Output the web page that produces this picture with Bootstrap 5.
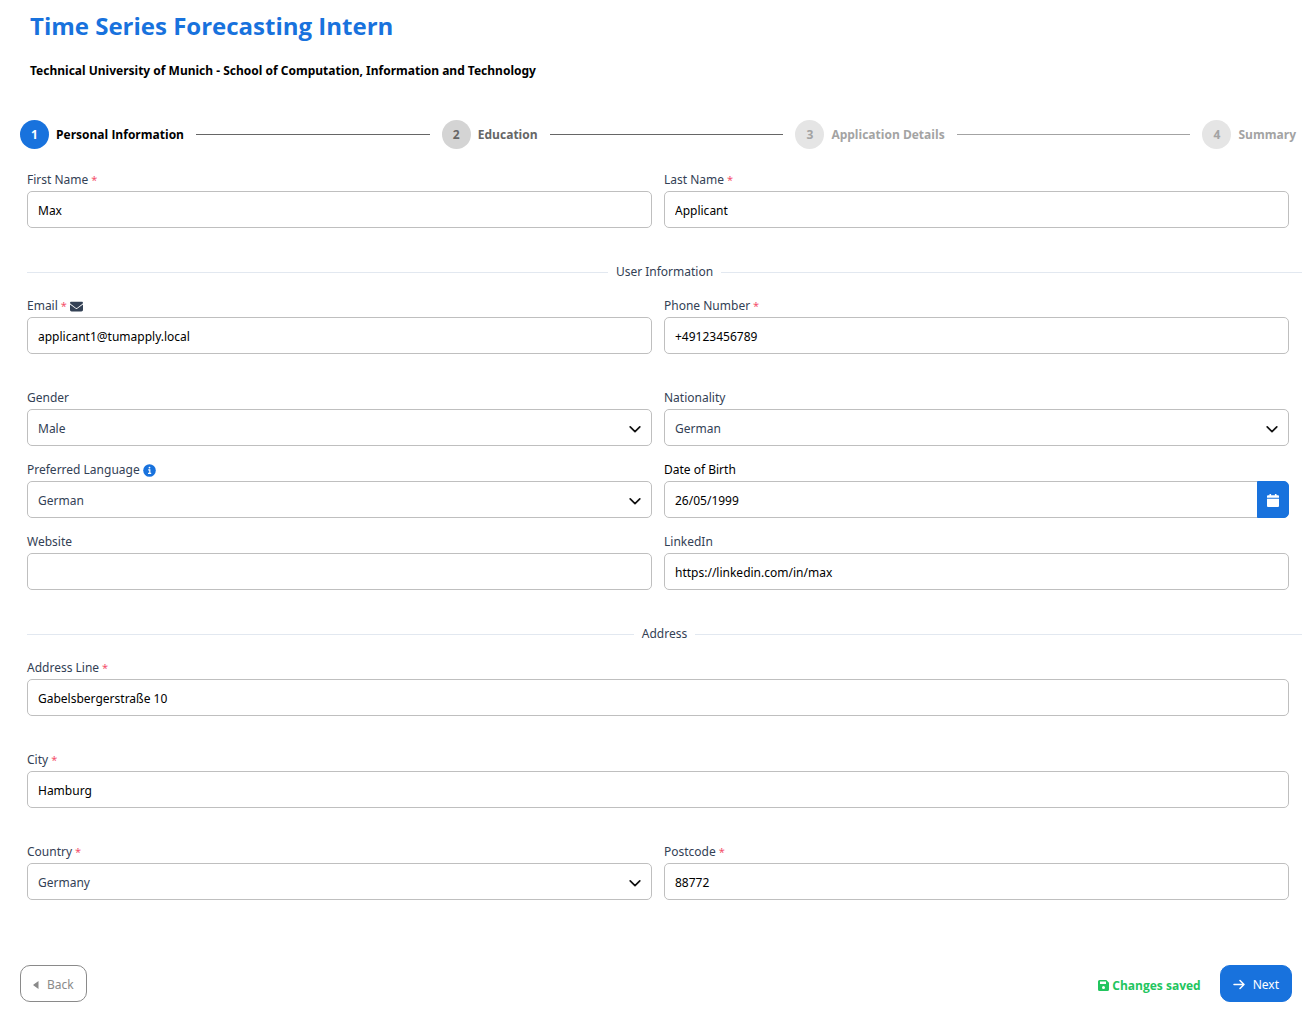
<!DOCTYPE html>
<html lang="en">
<head>
<meta charset="utf-8">
<meta name="viewport" content="width=device-width, initial-scale=1">
<title>Time Series Forecasting Intern</title>
<link href="https://cdn.jsdelivr.net/npm/bootstrap@5.3.0/dist/css/bootstrap.min.css" rel="stylesheet">
<style>
:root { --brand: #1872dd; --ink: #334155; --edge: #bfbfbf; }
body { font-family: "Noto Sans", "Open Sans", sans-serif; font-size: 12px; line-height: 18px; color: var(--ink); background: #fff; }
.page-head { padding: 8px 30px 0; }
.page-title { font-family: "Open Sans", sans-serif; font-size: 24px; font-weight: 700; line-height: 36px; color: var(--brand); margin: 0 0 18px; }
.page-sub { font-size: 12px; font-weight: 700; color: #000; margin: 0; }
.stepper { font-family: "Open Sans", sans-serif; padding: 0 20px; margin: 40px 0 22px; font-size: 12px; font-weight: 700; gap: 12px; }
.step { gap: 7px; padding: 0; border: 0; background: none; font-weight: 700; color: #a3a3a3; }
.step-num { width: 29px; height: 29px; border-radius: 50%; background: #e5e5e5; }
.step.is-next { color: #666; }
.step.is-next .step-num { background: #d4d4d4; }
.step.is-active { color: #000; }
.step.is-active .step-num { background: var(--brand); color: #fff; }
.step-line { height: 1px; background: #666; }
.step-line.is-far { background: #a3a3a3; }
.form-area { padding: 0 14px 0 27px; }
.field-row { --bs-gutter-x: 12px; margin-right: 7px; margin-bottom: 35px; }
.field-row.is-tight { margin-bottom: 15px; }
.form-label { display: flex; align-items: center; gap: 3px; height: 18px; margin-bottom: 2px; }
.req { color: #f4516c; font-size: 11px; }
.form-control, .form-select { height: 37px; padding: 2px 10px 0; font-size: 12px; line-height: 18px; border-color: var(--edge); border-radius: 5px; color: #000; }
.form-select { color: var(--ink); background-size: 12px 12px; background-position: right 10px top 13px;
  background-image: url("data:image/svg+xml,%3Csvg xmlns='http://www.w3.org/2000/svg' viewBox='0 0 12 12'%3E%3Cpath d='M1.200 3.800 6 8.600l4.800-4.800' fill='none' stroke='%23111' stroke-width='1.700' stroke-linecap='round' stroke-linejoin='round'/%3E%3C/svg%3E"); }
.btn { font-size: 12px; line-height: 18px; height: 37px; }
.btn-brand { background: var(--brand); color: #fff; border-color: var(--brand); }
.btn-brand:hover { background: #145fb8; color: #fff; }
.btn-date { width: 32px; padding: 2px 0 0; border-radius: 5px; }
.btn-nav { border-radius: 10px; padding: 2px 12px 0; }
.btn-back { color: #8a8a8a; border-color: #8a8a8a; }
.parting { gap: 8px; margin-bottom: 16px; }
.parting::before, .parting::after { content: ""; flex: 1; height: 1px; background: #e2e8f0; }
.page-foot { padding: 30px 24px 18px 20px; }
.saved-note { font-family: "Open Sans", sans-serif; color: #22c55e; font-weight: 700; gap: 3px; padding-top: 4px; margin-right: 19px; }
</style>
</head>
<body>
<header class="page-head">
  <h1 class="page-title">Time Series Forecasting Intern</h1>
  <p class="page-sub">Technical University of Munich - School of Computation, Information and Technology</p>
</header>

<nav class="stepper d-flex align-items-center" aria-label="Progress">
  <button type="button" class="step is-active d-flex align-items-center"><span class="step-num d-flex align-items-center justify-content-center">1</span>Personal Information</button>
  <span class="step-line flex-fill"></span>
  <button type="button" class="step is-next d-flex align-items-center"><span class="step-num d-flex align-items-center justify-content-center">2</span>Education</button>
  <span class="step-line flex-fill"></span>
  <button type="button" class="step d-flex align-items-center"><span class="step-num d-flex align-items-center justify-content-center">3</span>Application Details</button>
  <span class="step-line is-far flex-fill"></span>
  <button type="button" class="step d-flex align-items-center"><span class="step-num d-flex align-items-center justify-content-center">4</span>Summary</button>
</nav>

<form>
<div class="form-area">
  <div class="row field-row">
    <div class="col-6"><label class="form-label" for="first">First Name <span class="req">*</span></label><input class="form-control" id="first" type="text" value="Max"></div>
    <div class="col-6"><label class="form-label" for="last">Last Name <span class="req">*</span></label><input class="form-control" id="last" type="text" value="Applicant"></div>
  </div>

  <div class="parting d-flex align-items-center">User Information</div>

  <div class="row field-row">
    <div class="col-6"><label class="form-label" for="email">Email <span class="req">*</span>
      <svg width="13" height="13" viewBox="0 0 512 512" fill="currentColor" aria-hidden="true"><path d="M48 64C21.500 64 0 85.500 0 112c0 15.100 7.100 29.300 19.200 38.400L236.800 313.600c11.400 8.500 27 8.500 38.400 0L492.800 150.400c12.100-9.100 19.200-23.300 19.200-38.400 0-26.500-21.500-48-48-48H48zM0 176V384c0 35.300 28.700 64 64 64H448c35.300 0 64-28.700 64-64V176L294.400 339.200c-22.800 17.100-54 17.100-76.800 0L0 176z"/></svg></label>
      <input class="form-control" id="email" type="email" value="applicant1@tumapply.local"></div>
    <div class="col-6"><label class="form-label" for="phone">Phone Number <span class="req">*</span></label><input class="form-control" id="phone" type="tel" value="+49123456789"></div>
  </div>

  <div class="row field-row is-tight">
    <div class="col-6"><label class="form-label" for="gender">Gender</label><select class="form-select" id="gender"><option>Male</option></select></div>
    <div class="col-6"><label class="form-label" for="nation">Nationality</label><select class="form-select" id="nation"><option>German</option></select></div>
  </div>

  <div class="row field-row is-tight">
    <div class="col-6"><label class="form-label" for="lang">Preferred Language
      <svg width="13" height="13" viewBox="0 0 13 13" aria-hidden="true"><circle cx="6.500" cy="6.500" r="6.300" fill="#1872dd"/><path d="M5.200 5.800h1.600v3.400M5 9.400h3.200" fill="none" stroke="#fff" stroke-width="1.200"/><circle cx="6.500" cy="3.600" r=".9" fill="#fff"/></svg></label>
      <select class="form-select" id="lang"><option>German</option></select></div>
    <div class="col-6"><label class="form-label text-black" for="birth">Date of Birth</label>
      <div class="input-group flex-nowrap"><input class="form-control" id="birth" type="text" value="26/05/1999">
        <button class="btn btn-brand btn-date d-flex align-items-center justify-content-center" type="button" aria-label="Choose date"><svg width="12" height="13" viewBox="0 0 12 13" fill="#fff"><path d="M2.500 0h1.600v1.300h3.800V0h1.600v1.300H11a1 1 0 0 1 1 1v1.500H0V2.300a1 1 0 0 1 1-1h1.500zM0 4.800h12V12a1 1 0 0 1-1 1H1a1 1 0 0 1-1-1z"/></svg></button></div></div>
  </div>

  <div class="row field-row">
    <div class="col-6"><label class="form-label" for="site">Website</label><input class="form-control" id="site" type="text"></div>
    <div class="col-6"><label class="form-label" for="linked">LinkedIn</label><input class="form-control" id="linked" type="text" value="https://linkedin.com/in/max"></div>
  </div>

  <div class="parting d-flex align-items-center">Address</div>

  <div class="row field-row">
    <div class="col-12"><label class="form-label" for="street">Address Line <span class="req">*</span></label><input class="form-control" id="street" type="text" value="Gabelsbergerstraße 10"></div>
  </div>
  <div class="row field-row">
    <div class="col-12"><label class="form-label" for="city">City <span class="req">*</span></label><input class="form-control" id="city" type="text" value="Hamburg"></div>
  </div>
  <div class="row field-row">
    <div class="col-6"><label class="form-label" for="country">Country <span class="req">*</span></label><select class="form-select" id="country"><option>Germany</option></select></div>
    <div class="col-6"><label class="form-label" for="zip">Postcode <span class="req">*</span></label><input class="form-control" id="zip" type="text" value="88772"></div>
  </div>
</div>

<footer class="page-foot d-flex align-items-center">
  <button type="button" class="btn btn-nav btn-back d-flex align-items-center gap-2"><svg width="6" height="10" viewBox="0 0 6 10" fill="currentColor" aria-hidden="true"><path d="M5.500 1v8L.6 5.500a.6.6 0 0 1 0-1z"/></svg>Back</button>
  <span class="saved-note d-flex align-items-center ms-auto"><svg width="11" height="11" viewBox="0 0 11 11" fill="currentColor" aria-hidden="true"><path fill-rule="evenodd" d="M1.500 0h6.800L11 2.700v6.800A1.500 1.500 0 0 1 9.500 11h-8A1.500 1.500 0 0 1 0 9.500v-8A1.500 1.500 0 0 1 1.500 0zM2 1.600v2.500h6V1.600zM5.500 6a1.500 1.500 0 1 0 0 3 1.500 1.500 0 0 0 0-3z"/></svg>Changes saved</span>
  <button type="button" class="btn btn-nav btn-brand d-flex align-items-center gap-1"><svg class="me-1" width="12" height="12" viewBox="0 0 12 12" fill="none" stroke="currentColor" stroke-width="1.500" stroke-linecap="round" stroke-linejoin="round" aria-hidden="true"><path d="M1 5.500h10M7 1.500l4 4-4 4"/></svg>Next</button>
</footer>
</form>
<script src="https://cdn.jsdelivr.net/npm/bootstrap@5.3.0/dist/js/bootstrap.bundle.min.js"></script>
</body>
</html>
